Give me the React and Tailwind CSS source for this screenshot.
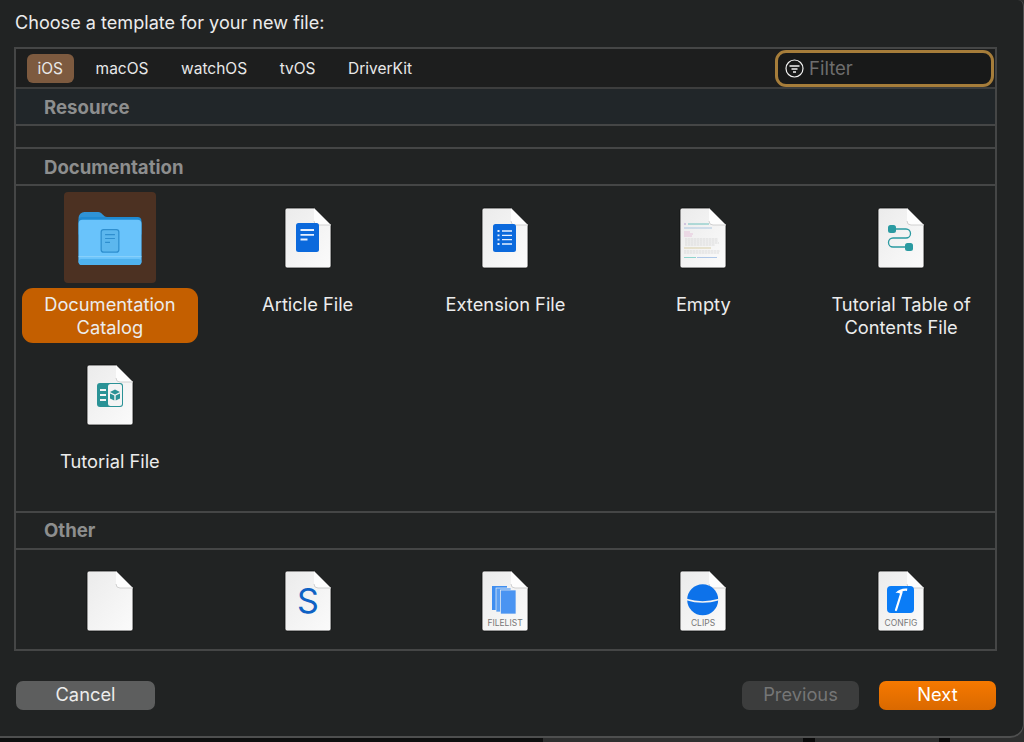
import React from 'react';

const font = { fontFamily: 'Inter, "Liberation Sans", sans-serif' };

// page shape shared by all the document icons
function FileIcon({ children }) {
  return (
    <svg width="50" height="64" viewBox="-2 -2 50 64" className="block">
      <defs>
        <linearGradient id="page" x1="0" y1="0" x2="1" y2="1">
          <stop offset="0" stopColor="#ebebeb" />
          <stop offset="1" stopColor="#fbfbfb" />
        </linearGradient>
      </defs>
      <path d="M2 0H29L46 17V58a2 2 0 0 1-2 2H2a2 2 0 0 1-2-2V2a2 2 0 0 1 2-2Z" fill="url(#page)" stroke="#0c0c0c" strokeWidth="0.8" />
      <path d="M29 0L46 17H33a4 4 0 0 1-4-4Z" fill="#fdfdfd" />
      <path d="M29 13a4 4 0 0 0 4 4H46" fill="none" stroke="#d0d0d0" strokeWidth="1" />
      {children}
    </svg>
  );
}

function FolderIcon() {
  return (
    <svg width="64" height="55" viewBox="0 0 64 56" className="mt-[4px] block">
      <path d="M0 8a6 6 0 0 1 6-6h14c4 0 5 5 9 5h29a6 6 0 0 1 6 6v12H0Z" fill="#2f93d6" />
      <rect x="0" y="7" width="64" height="49" rx="4" fill="#1f8ad2" />
      <rect x="0" y="10" width="64" height="46" rx="4" fill="#69c3fb" />
      <rect x="0" y="47" width="64" height="1" fill="#8ed2fb" />
      <rect x="0" y="50" width="64" height="6" rx="3" fill="#4fb2ee" />
      <rect x="23" y="20" width="18" height="23" rx="2.5" fill="#5cb7ee" stroke="#2f8fcf" strokeWidth="1.3" />
      <path d="M27 25h10M27 29h10M27 33h5" stroke="#2f8fcf" strokeWidth="1.2" />
    </svg>
  );
}

const Article = () => (
  <FileIcon>
    <rect x="11" y="15" width="23" height="29" rx="2.5" fill="#0b69dc" />
    <path d="M15.500 22h13.500M15.500 26.800h13.500M15.500 31.500h7" stroke="#e6f0ff" strokeWidth="1.800" />
  </FileIcon>
);

const Extension = () => (
  <FileIcon>
    <rect x="11" y="16" width="23" height="28" rx="2.5" fill="#0b69dc" />
    <path d="M20 23h10M20 27.300h10M20 31.600h10M20 36h10" stroke="#e6f0ff" strokeWidth="1.300" />
    <path d="M15.500 23h2M15.500 27.300h2M15.500 31.600h2M15.500 36h2" stroke="#e6f0ff" strokeWidth="1.800" />
  </FileIcon>
);

const Empty = () => (
  <FileIcon>
    <path d="M4 16h2" stroke="#a487c8" strokeWidth="0.8" />
    <path d="M8 16h21" stroke="#4db5b0" strokeWidth="0.8" />
    <path d="M4 20h28" stroke="#8eb6d8" strokeWidth="0.7" />
    <path d="M4 24h6M4 26h9M4 28h8" stroke="#e0a6cc" strokeWidth="0.6" />
    <path d="M5 31h33M5 33h33M5 35h34M5 37h30" stroke="#d0d0d0" strokeWidth="0.7" strokeDasharray="2.500 0.500" />
    <path d="M4 40h27" stroke="#cdbd84" strokeWidth="0.7" />
    <path d="M4 43h36M4 45h35" stroke="#d0d0d0" strokeWidth="0.7" strokeDasharray="2.500 0.500" />
    <path d="M4 49.500h12" stroke="#62c4bc" strokeWidth="0.7" />
    <path d="M17 49.500h20" stroke="#8eb2e0" strokeWidth="0.7" />
  </FileIcon>
);

const TableOfContents = () => (
  <FileIcon>
    <path d="M18 21H28a4.500 4.500 0 0 1 0 9H15a4.500 4.500 0 0 0 0 9H27" fill="none" stroke="#2a9aa1" strokeWidth="1.300" />
    <rect x="10" y="17" width="8" height="8" rx="2.500" fill="#2a9aa1" />
    <rect x="27" y="35" width="8" height="8" rx="2.500" fill="#2a9aa1" />
  </FileIcon>
);

const TutorialIcon = () => (
  <FileIcon>
    <rect x="10" y="18" width="26" height="24" rx="3" fill="#2a9296" />
    <rect x="21" y="19" width="14" height="22" rx="2.500" fill="#f4f4f4" />
    <path d="M13 25h6M13 30h6M13 35h6" stroke="#f4f4f4" strokeWidth="1.800" />
    <path d="M28 24.500l5 2.500-5 2.500-5-2.500ZM23 28.500l4.300 2v5l-4.300-2ZM33 28.500l-4.300 2v5l4.300-2Z" fill="#2a9296" />
  </FileIcon>
);

const Blank = () => <FileIcon />;

const Swift = () => (
  <FileIcon>
    <text x="23" y="42" textAnchor="middle" fontSize="34" fill="#0f62c4" style={font}>S</text>
  </FileIcon>
);

const FileLabel = ({ label }) => (
  <text x="23" y="55" textAnchor="middle" fontSize="8.500" fill="#777777" style={font}>{label}</text>
);

const FileList = () => (
  <FileIcon>
    <rect x="10" y="15" width="15" height="24" fill="#3f8ef0" />
    <rect x="14" y="17" width="15" height="24" fill="#5a9ff3" stroke="#f3f3f3" strokeWidth="0.700" />
    <rect x="18.500" y="19" width="15.500" height="24" fill="#4a94f2" stroke="#f3f3f3" strokeWidth="0.700" />
    <FileLabel label="FILELIST" />
  </FileIcon>
);

const Clips = () => (
  <FileIcon>
    <circle cx="22.700" cy="28.700" r="15.500" fill="#0d72ea" />
    <path d="M6.500 28.500q16 5 32.500 0" fill="none" stroke="#f3f3f3" strokeWidth="1.600" />
    <FileLabel label="CLIPS" />
  </FileIcon>
);

const Config = () => (
  <FileIcon>
    <rect x="9" y="15" width="27" height="27" rx="4" fill="#0a7cf6" />
    <path d="M18 39l5.500-17.500" stroke="#ffffff" strokeWidth="2.200" strokeLinecap="round" />
    <path d="M17.500 22q4-5 11.800-4.500l-.3 2.400q-3.500-.4-5 1l-1 2-2.500-1q-1.500-.5-3 .1Z" fill="#ffffff" />
    <FileLabel label="CONFIG" />
  </FileIcon>
);

function Cell({ icon, label, selected }) {
  return (
    <div className="flex flex-col items-center">
      <div className={`flex h-[91px] w-[92px] items-start justify-center rounded-[4px] pt-[14px] ${selected ? 'bg-[#4c3122]' : ''}`}>
        {icon}
      </div>
      {label && (
        <div className={`mt-[5px] h-[55px] w-full rounded-[11px] pt-[5px] text-center text-[18.300px] leading-[23px] text-[#ececec] ${selected ? 'bg-[#c45f00]' : ''}`}>
          {label}
        </div>
      )}
    </div>
  );
}

function SectionHeader({ children, className = '' }) {
  return (
    <div className={`flex h-[37px] items-center border-b-2 border-[#454646] pl-[28px] text-[18.600px] font-bold text-[#8d8e8e] ${className}`}>
      {children}
    </div>
  );
}

const tabs = ['iOS', 'macOS', 'watchOS', 'tvOS', 'DriverKit'];

export default function App() {
  return (
    <div className="relative h-[742px] w-[1024px] overflow-hidden bg-[#2e2f2f]" style={font}>
      <div className="absolute bottom-0 left-0 h-[4px] w-[543px] bg-[#0e0f0f]" />
      <div className="absolute bottom-0 left-[803px] h-[4px] w-[12px] bg-[#0a0a0a]" />
      <div className="absolute bottom-0 left-[939px] h-[4px] w-[11px] bg-[#0a0a0a]" />
      <div className="relative flex h-[738px] flex-col rounded-tr-[6px] rounded-br-[14px] border-r border-b-2 border-[#4e4f4f] bg-[#212323] pl-[14px] pr-[26px]">
        <div className="flex h-[47px] items-center pb-[1px] pl-[1px] text-[18.100px] text-[#ececec]">Choose a template for your new file:</div>

        <div className="h-[604px] border-2 border-[#454646]">
          <div className="flex h-[40px] items-center border-b-2 border-[#3d3e3e] bg-[#1d1e1e] pl-[11px] pr-[1px] pt-[1px]">
            <div className="flex items-center gap-[11.500px]">
              {tabs.map((t, i) => (
                <div key={t} className={`flex h-[29px] items-center rounded-[6px] px-[10.500px] text-[15.500px] text-[#e8e8e8] ${i === 0 ? 'bg-[#7d5a3f]' : ''}`}>
                  {t}
                </div>
              ))}
            </div>
            <div className="ml-auto flex h-[37px] w-[219px] items-center gap-[5px] rounded-[11px] border-[3px] border-[#a67d3a] bg-[#181919] pl-[7px]">
              <svg width="19" height="19" viewBox="0 0 19 19" fill="none" stroke="#f2f2f2">
                <circle cx="9.500" cy="9.500" r="8.500" strokeWidth="1.200" />
                <path d="M4.500 7h10M6.500 10h6M8 13h3" strokeWidth="1.300" />
              </svg>
              <span className="text-[18.500px] text-[#6e6e6e]">Filter</span>
            </div>
          </div>

          <SectionHeader className="bg-[#212629] pt-[2px]">Resource</SectionHeader>
          <div className="h-[23px] border-b-2 border-[#454646]" />
          <SectionHeader className="pt-[2px]">Documentation</SectionHeader>

          <div className="h-[327px] border-b-2 border-[#454646] px-[6px] pt-[6px]">
            <div className="grid grid-cols-5 gap-x-[22px] gap-y-[6px]">
              <Cell icon={<FolderIcon />} label={<>Documentation<br />Catalog</>} selected />
              <Cell icon={<Article />} label="Article File" />
              <Cell icon={<Extension />} label="Extension File" />
              <Cell icon={<Empty />} label="Empty" />
              <Cell icon={<TableOfContents />} label={<>Tutorial Table of<br />Contents File</>} />
              <Cell icon={<TutorialIcon />} label="Tutorial File" />
            </div>
          </div>

          <SectionHeader>Other</SectionHeader>

          <div className="px-[6px] pt-[5px]">
            <div className="grid grid-cols-5 gap-x-[22px]">
              <Cell icon={<Blank />} />
              <Cell icon={<Swift />} />
              <Cell icon={<FileList />} />
              <Cell icon={<Clips />} />
              <Cell icon={<Config />} />
            </div>
          </div>
        </div>

        <div className="mt-[30px] flex items-center pl-[2px] pr-[1px] text-[18.300px]">
          <div className="flex h-[29px] w-[139px] items-center justify-center rounded-[7px] bg-[#5d5e5e] pb-[1px] text-[#ececec]">Cancel</div>
          <div className="ml-auto flex h-[29px] w-[117px] items-center justify-center rounded-[7px] bg-[#3c3d3d] pb-[1px] text-[#757676]">Previous</div>
          <div className="ml-[20px] flex h-[29px] w-[117px] items-center justify-center rounded-[7px] bg-gradient-to-b from-[#f67900] to-[#da6900] pb-[1px] text-white">Next</div>
        </div>
      </div>
    </div>
  );
}
